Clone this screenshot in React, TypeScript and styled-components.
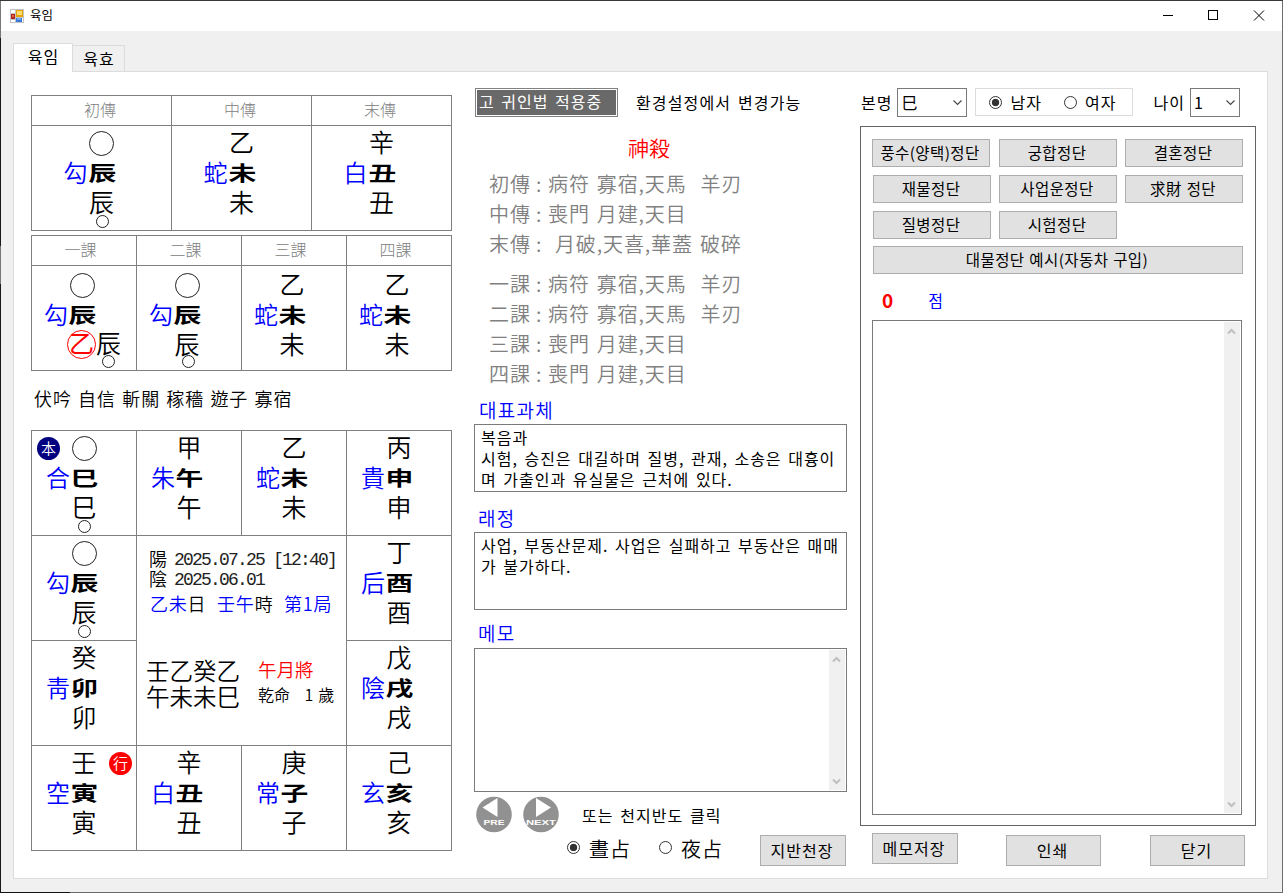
import React from "react";
import styled, { createGlobalStyle, css } from "styled-components";

const GlobalStyle = createGlobalStyle`
  html, body { margin: 0; padding: 0; overflow: hidden; }
  *, *::before, *::after { box-sizing: border-box; }
  body {
    font-family: "Noto Sans CJK KR", "Noto Sans", sans-serif;
    color: #000;
    background: #fff;
  }
`;

/* ---------- window frame ---------- */

const Window = styled.div`
  width: 1283px;
  height: 893px;
  padding: 1px;
  background:
    linear-gradient(#3a363b, #3a363b) 0 0 / 100% 1px no-repeat,
    linear-gradient(90deg, #151215 70px, #6b6b6b 70px) 0 100% / 100% 1px no-repeat,
    linear-gradient(#777 38px, #1a181b 38px 246px, #777 246px 284px, #1a181b 284px) 0 0 / 1px 100% no-repeat,
    #6b6b6b;
`;

const Frame = styled.div`
  display: flex;
  flex-direction: column;
  height: 891px;
  background: #f0f0f0;
`;

const TitleBar = styled.header`
  display: flex;
  align-items: center;
  height: 30px;
  padding-left: 9px;
  background: #fff;
`;

const Title = styled.span`
  flex: 1;
  margin-left: 6px;
  font-size: 12.5px;
  line-height: 20px;
  padding-bottom: 2px;
`;

const WindowButtons = styled.div`
  display: flex;
  svg { display: block; width: 46px; height: 30px; }
`;

const TabStrip = styled.nav`
  display: flex;
  align-items: flex-end;
  height: 40px;
  padding-left: 12px;
`;

const Tab = styled.div<{ $active?: boolean }>`
  padding-left: 1px;
  font-size: 16px;
  letter-spacing: 1px;
  text-align: center;
  border: 1px solid #dcdcdc;
  border-bottom: 0;
  ${(p) =>
    p.$active
      ? css`
          width: 60px;
          height: 29px;
          margin-bottom: -1px;
          line-height: 25px;
          background: #fff;
          position: relative;
        `
      : css`
          width: 53px;
          height: 26px;
          margin-left: -1px;
          line-height: 24px;
          background: #f0f0f0;
        `}
`;

const Page = styled.main`
  display: flex;
  align-items: flex-start;
  width: 1255px;
  height: 808px;
  margin-left: 12px;
  padding-left: 17px;
  background: #fff;
  border: 1px solid #dcdcdc;
`;

const Column = styled.section<{ $w: number; $top: number; $gap?: number }>`
  display: flex;
  flex-direction: column;
  flex: none;
  width: ${(p) => p.$w}px;
  padding-top: ${(p) => p.$top}px;
  margin-left: ${(p) => p.$gap ?? 0}px;
`;

/* ---------- divination charts ---------- */

const LINE = "#808080";
const KAI = `"Noto Sans CJK TC", "Noto Sans", sans-serif`;

const Chart = styled.div<{ $cols: number; $cell: number; $mt?: number }>`
  display: grid;
  grid-template-columns: repeat(${(p) => p.$cols}, ${(p) => p.$cell}px);
  width: 421px;
  margin-top: ${(p) => p.$mt ?? 0}px;
  border-top: 1px solid ${LINE};
  border-left: 1px solid ${LINE};
  font-family: ${KAI};
  font-weight: 350;
`;

const HeadCell = styled.div<{ $shift?: number }>`
  height: 30px;
  padding-right: ${(p) => p.$shift ?? 0}px;
  border-right: 1px solid ${LINE};
  border-bottom: 1px solid ${LINE};
  color: ${LINE};
  font-size: 16px;
  font-weight: 300;
  line-height: 27px;
  text-align: center;
`;

const CellBox = styled.div<{ $shift: number; $down: number }>`
  position: relative;
  display: flex;
  flex-direction: column;
  align-items: center;
  height: 105px;
  padding-top: ${(p) => p.$down}px;
  padding-right: ${(p) => Math.max(0, -p.$shift) * 2}px;
  padding-left: ${(p) => Math.max(0, p.$shift) * 2}px;
  border-right: 1px solid ${LINE};
  border-bottom: 1px solid ${LINE};
`;

const Glyph = styled.div`
  height: 30px;
  font-size: 25px;
  line-height: 25px;
`;

const VoidMark = styled.div`
  width: 25px;
  height: 25px;
  margin: 2px 0 3px;
  border: 1px solid #222;
  border-radius: 50%;
`;

const Pair = styled.div`
  display: flex;
  height: 30px;
  padding-right: 24px;
  line-height: 26px;
`;

const General = styled.span`
  width: 25px;
  color: #00f;
  font-size: 24px;
`;

const Seal = styled.span`
  width: 27px;
  font-size: 27px;
  font-weight: 700;
  transform: scale(1.03, 0.74);
`;

const SmallRing = styled.i<{ $dx?: number }>`
  position: absolute;
  top: 89px;
  left: calc(50% + ${(p) => p.$dx ?? 0}px);
  width: 13px;
  height: 13px;
  margin-left: -6px;
  border: 1px solid #222;
  border-radius: 50%;
`;

const Badge = styled.span<{ $bg: string; $left: number }>`
  position: absolute;
  top: 6px;
  left: ${(p) => p.$left}px;
  width: 23px;
  height: 23px;
  border-radius: 50%;
  background: ${(p) => p.$bg};
  color: #fff;
  font-size: 15px;
  line-height: 21px;
  text-align: center;
`;

const DayPair = styled.div`
  display: flex;
  align-items: flex-start;
  padding-left: 24px;
  font-size: 25px;
  line-height: 23px;
`;

const RedRing = styled.span`
  width: 29px;
  height: 29px;
  margin-top: -1px;
  border: 1px solid #f00;
  border-radius: 50%;
  color: #f00;
  font-weight: 400;
  line-height: 23px;
  text-align: center;
`;

const Traits = styled.div`
  height: 60px;
  padding-left: 3px;
  font-family: ${KAI};
  font-size: 18px;
  font-weight: 350;
  line-height: 55px;
  letter-spacing: 0.9px;
  word-spacing: 1.4px;
  white-space: nowrap;
`;

const Center = styled.div`
  grid-column: 2 / span 2;
  grid-row: 2 / span 2;
  padding: 13px 0 0 12px;
  border-right: 1px solid ${LINE};
  border-bottom: 1px solid ${LINE};
  white-space: pre;
`;

const DateLine = styled.div`
  display: flex;
  height: 20px;
  font-size: 18px;
  line-height: 19px;
`;

const Digits = styled.span`
  margin-left: 7px;
  font-family: "Liberation Mono", monospace;
  font-size: 18px;
  letter-spacing: -1.8px;
  line-height: 22px;
  color: #222;
`;

const Hour = styled.div`
  height: 30px;
  padding-left: 1px;
  font-size: 18px;
  line-height: 28px;
  letter-spacing: 0.8px;
  word-spacing: 5.8px;
  margin-bottom: 38px;
`;

const Ink = styled.span<{ $c: string }>`
  color: ${(p) => p.$c};
`;

const Pillars = styled.div`
  display: flex;
  margin-left: -3px;
`;

const PillarText = styled.div`
  width: 112px;
  font-size: 23.5px;
  line-height: 26px;
`;

const PillarSide = styled.div`
  font-size: 16px;
  line-height: 26px;
  word-spacing: 1.3px;
`;

const MonthGeneral = styled.div`
  color: #f00;
  font-size: 18.5px;
  line-height: 24px;
`;

/* ---------- shared controls ---------- */

const Text = styled.span<{
  $size?: number;
  $ls?: number;
  $ws?: number;
  $c?: string;
  $ml?: number;
  $weight?: number;
}>`
  font-size: ${(p) => p.$size ?? 16}px;
  letter-spacing: ${(p) => p.$ls ?? 1}px;
  word-spacing: ${(p) => p.$ws ?? 2}px;
  color: ${(p) => p.$c ?? "#000"};
  margin-left: ${(p) => p.$ml ?? 0}px;
  padding-bottom: 1px;
  font-weight: ${(p) => p.$weight ?? 400};
  white-space: pre;
`;

const Bar = styled.div<{ $h: number; $mt?: number; $pl?: number }>`
  display: flex;
  align-items: center;
  flex: none;
  height: ${(p) => p.$h}px;
  margin-top: ${(p) => p.$mt ?? 0}px;
  padding-left: ${(p) => p.$pl ?? 0}px;
  line-height: 24px;
`;

const Notice = styled.div`
  width: 143px;
  height: 29px;
  padding-left: 3px;
  border: 1px solid #808080;
  box-shadow: inset 0 0 0 1px #fff;
  background: #696969;
  line-height: 24px;
`;

const Button = styled.button<{ $w?: number; $h?: number; $ml?: number; $mt?: number; $size?: number }>`
  flex: none;
  width: ${(p) => p.$w ?? 118}px;
  height: ${(p) => p.$h ?? 28}px;
  margin: ${(p) => p.$mt ?? 0}px 0 0 ${(p) => p.$ml ?? 0}px;
  padding: 0 2px 2px 0;
  border: 1px solid #adadad;
  background: #e1e1e1;
  color: #000;
  font-family: inherit;
  font-size: ${(p) => p.$size ?? 15.5}px;
  letter-spacing: ${(p) => (p.$size ? 1 : 0.4)}px;
  word-spacing: 1px;
  line-height: 20px;
  white-space: nowrap;
`;

const RadioDot = styled.i<{ $on?: boolean }>`
  flex: none;
  width: 13px;
  height: 13px;
  border: 1px solid #333;
  border-radius: 50%;
  background: ${(p) => (p.$on ? "radial-gradient(circle, #333 3.4px, #fff 4.1px)" : "#fff")};
`;

const SelectBox = styled.div<{ $w: number; $ml: number }>`
  display: flex;
  align-items: center;
  justify-content: space-between;
  width: ${(p) => p.$w}px;
  height: 29px;
  margin-left: ${(p) => p.$ml}px;
  padding: 0 4px 1px 3px;
  border: 1px solid #7a7a7a;
  font-size: 16px;
  line-height: 24px;
`;

const GenderGroup = styled.div`
  display: flex;
  align-items: center;
  width: 158px;
  height: 28px;
  margin: 0 0 1px 8px;
  padding-left: 13px;
  border: 1px solid #dcdcdc;
`;

const StarLine = styled.div`
  display: flex;
  height: 30px;
  padding-left: 15px;
  color: #808080;
  font-size: 20px;
  font-weight: 350;
  line-height: 28px;
  letter-spacing: 0.9px;
  word-spacing: 1.6px;
  white-space: pre;
`;

const StarName = styled.span`
  width: 47px;
`;

const StarColon = styled.span`
  width: 12px;
`;

const NoteBox = styled.div<{ $h: number }>`
  display: flex;
  justify-content: space-between;
  flex: none;
  width: 373px;
  height: ${(p) => p.$h}px;
  padding: 1px;
  border: 1px solid #7a7a7a;
  background: #fff;
`;

const NoteText = styled.p`
  margin: 0;
  padding: 1px 0 0 5px;
  font-size: 16px;
  line-height: 21px;
  letter-spacing: 0.97px;
  word-spacing: 2.1px;
  white-space: pre;
`;

const Track = styled.div`
  display: flex;
  flex-direction: column;
  justify-content: space-between;
  align-items: center;
  width: 16px;
  padding: 6px 1px 5px 0;
  background: #f0f0f0;
`;

const Panel = styled.div`
  display: flex;
  flex-direction: column;
  width: 396px;
  height: 700px;
  margin-top: 9px;
  padding: 12px 0 0 11px;
  border: 1px solid #646464;
`;

const ButtonGrid = styled.div`
  display: grid;
  grid-template-columns: 118px 118px 118px;
  column-gap: 8px;
  row-gap: 8px;
  padding-left: 1px;

  & > :first-child { margin-left: -1px; }
`;

const Result = styled(NoteBox)`
  width: 370px;
`;

const NavRow = styled.div`
  display: flex;
  align-items: center;
  height: 38px;
  margin-top: 4px;
  padding-left: 1px;
  svg { display: block; margin-right: 9px; }
`;

/* ---------- small drawings ---------- */

const Chevron = ({ up }: { up?: boolean }) => (
  <svg width="9" height="7" viewBox="0 0 9 7">
    <path d={up ? "M1 5.5 4.5 2 8 5.5" : "M1 1.5 4.5 5 8 1.5"} fill="none" stroke="#bfbfbf" strokeWidth="2" />
  </svg>
);

const SelectArrow = () => (
  <svg width="9" height="7" viewBox="0 0 9 7">
    <path d="M0.500 1.500 4.500 5.500 8.500 1.500" fill="none" stroke="#444" strokeWidth="1.100" />
  </svg>
);

const Scroll = () => (
  <Track>
    <Chevron up />
    <Chevron />
  </Track>
);

const AppIcon = () => (
  <svg width="14" height="14" viewBox="0 0 14 14">
    <rect width="14" height="14" fill="#c3c3c3" />
    <rect x="1" y="1" width="4" height="3" fill="#fff" />
    <rect x="1" y="11" width="4" height="2" fill="#fff" />
    <rect x="12" y="9" width="1" height="4" fill="#fff" />
    <rect x="1" y="5" width="4" height="5" fill="#b3261e" />
    <rect x="2" y="6" width="2" height="2" fill="#e0604f" />
    <rect x="6" y="1" width="7" height="7" fill="#e5a50a" />
    <rect x="7" y="2" width="5" height="4" fill="#ffdc6b" />
    <rect x="6" y="9" width="6" height="4" fill="#3a78d8" />
    <rect x="7" y="9" width="4" height="2" fill="#6fa5ef" />
  </svg>
);

const NavIcon = ({ next }: { next?: boolean }) => (
  <svg width="38" height="38" viewBox="0 0 38 38">
    <circle cx="19" cy="18.500" r="17.8" fill="#919191" />
    <path d={next ? "M14 2v19l15-9.5z" : "M22.500 2v19L7.500 11.500z"} fill="#fff" />
    <text
      x="19"
      y="28.800"
      textAnchor="middle"
      textLength={next ? 30 : 21}
      lengthAdjust="spacingAndGlyphs"
      fontFamily="Liberation Sans, sans-serif"
      fontSize="8"
      fontWeight="700"
      fill="#fff"
    >
      {next ? "NEXT" : "PRE"}
    </text>
  </svg>
);

/* ---------- chart cell ---------- */

type CellData = {
  top: string | null;
  general: string;
  seal: string;
  base: string;
  ring?: boolean;
  badge?: { text: string; bg: string; left: number };
  day?: string;
};

const Cell = ({ d, shift = 0, down = 3 }: { d: CellData; shift?: number; down?: number }) => (
  <CellBox $shift={shift} $down={down}>
    {d.top ? <Glyph>{d.top}</Glyph> : <VoidMark />}
    <Pair>
      <General>{d.general}</General>
      <Seal>{d.seal}</Seal>
    </Pair>
    {d.day ? (
      <DayPair>
        <RedRing>{d.day}</RedRing>
        {d.base}
      </DayPair>
    ) : (
      <Glyph>{d.base}</Glyph>
    )}
    {d.ring && <SmallRing $dx={d.day ? 24 : shift < 0 ? -1 : 0} />}
    {d.badge && (
      <Badge $bg={d.badge.bg} $left={d.badge.left}>
        {d.badge.text}
      </Badge>
    )}
  </CellBox>
);

const c = (top: string | null, general: string, seal: string, extra: Partial<CellData> = {}): CellData => ({
  top,
  general,
  seal,
  base: seal,
  ...extra,
});

const passes = [c(null, "勾", "辰", { ring: true }), c("乙", "蛇", "未"), c("辛", "白", "丑")];

const lessons = [
  c(null, "勾", "辰", { ring: true, day: "乙" }),
  c(null, "勾", "辰", { ring: true }),
  c("乙", "蛇", "未"),
  c("乙", "蛇", "未"),
];

const plateUpper = [
  c(null, "合", "巳", { ring: true, badge: { text: "本", bg: "#000080", left: 5 } }),
  c("甲", "朱", "午"),
  c("乙", "蛇", "未"),
  c("丙", "貴", "申"),
  c(null, "勾", "辰", { ring: true }),
];

const plateLower = [
  c("丁", "后", "酉"),
  c("癸", "靑", "卯"),
  c("戊", "陰", "戌"),
  c("壬", "空", "寅", { badge: { text: "行", bg: "#ff0000", left: 77 } }),
  c("辛", "白", "丑"),
  c("庚", "常", "子"),
  c("己", "玄", "亥"),
];

const starsUpper = [
  ["初傳", "病符 寡宿,天馬  羊刃"],
  ["中傳", "喪門 月建,天目"],
  ["末傳", " 月破,天喜,華蓋 破碎"],
];

const starsLower = [
  ["一課", "病符 寡宿,天馬  羊刃"],
  ["二課", "病符 寡宿,天馬  羊刃"],
  ["三課", "喪門 月建,天目"],
  ["四課", "喪門 月建,天目"],
];

const Stars = ({ rows }: { rows: string[][] }) => (
  <>
    {rows.map(([name, text]) => (
      <StarLine key={name}>
        <StarName>{name}</StarName>
        <StarColon>:</StarColon>
        <span>{text}</span>
      </StarLine>
    ))}
  </>
);

export default function App() {
  return (
    <Window>
      <GlobalStyle />
      <Frame>
        <TitleBar>
          <AppIcon />
          <Title>육임</Title>
          <WindowButtons>
            <svg viewBox="0 0 46 30"><path d="M19 14.500h10" stroke="#000" /></svg>
            <svg viewBox="0 0 46 30"><rect x="18.500" y="9.500" width="9" height="9" fill="none" stroke="#000" /></svg>
            <svg viewBox="0 0 46 30"><path d="m18 9.500 10 10m0-10-10 10" stroke="#000" /></svg>
          </WindowButtons>
        </TitleBar>

        <TabStrip>
          <Tab $active>육임</Tab>
          <Tab>육효</Tab>
        </TabStrip>

        <Page>
          <Column $w={421} $top={23}>
            <Chart $cols={3} $cell={140}>
              {["初傳", "中傳", "末傳"].map((t) => (
                <HeadCell key={t} $shift={3}>{t}</HeadCell>
              ))}
              {passes.map((d, i) => (
                <Cell key={i} d={d} />
              ))}
            </Chart>
            <Chart $cols={4} $cell={105} $mt={4}>
              {["一課", "二課", "三課", "四課"].map((t) => (
                <HeadCell key={t} $shift={7}>{t}</HeadCell>
              ))}
              {lessons.map((d, i) => (
                <Cell key={i} d={d} shift={-2} down={5} />
              ))}
            </Chart>
            <Traits>伏吟 自信 斬關 稼穡 遊子 寡宿</Traits>
            <Chart $cols={4} $cell={105} $mt={-1}>
              {plateUpper.map((d, i) => (
                <Cell key={i} d={d} />
              ))}
              <Center>
                <DateLine>陽<Digits>2025.07.25 [12:40]</Digits></DateLine>
                <DateLine>陰<Digits>2025.06.01</Digits></DateLine>
                <Hour>
                  <Ink $c="#00f">乙未</Ink>日 <Ink $c="#00f">壬午</Ink>時 <Ink $c="#00f">第1局</Ink>
                </Hour>
                <Pillars>
                  <PillarText>壬乙癸乙<br />午未未巳</PillarText>
                  <PillarSide>
                    <MonthGeneral>午月將</MonthGeneral>
                    乾命   1 歲
                  </PillarSide>
                </Pillars>
              </Center>
              {plateLower.map((d, i) => (
                <Cell key={i} d={d} />
              ))}
            </Chart>
          </Column>

          <Column $w={373} $top={16} $gap={22}>
            <Bar $h={29} $pl={1}>
              <Notice><Text $c="#fff">고 귀인법 적용중</Text></Notice>
              <Text $ml={18} $ls={1.15}>환경설정에서 변경가능</Text>
            </Bar>
            <Bar $h={28} $mt={16} $pl={154}>
              <Text $size={21} $ls={0} $c="#f00" $weight={350}>神殺</Text>
            </Bar>
            <Bar $h={9} />
            <Stars rows={starsUpper} />
            <Bar $h={10} />
            <Stars rows={starsLower} />
            <Bar $h={28} $mt={6} $pl={5}><Text $size={19} $ls={1.3} $c="#00f" $weight={350}>대표과체</Text></Bar>
            <NoteBox $h={68}>
              <NoteText>{"복음과\n시험, 승진은 대길하며 질병, 관재, 소송은 대흉이\n며 가출인과 유실물은 근처에 있다."}</NoteText>
            </NoteBox>
            <Bar $h={28} $mt={12} $pl={4}><Text $size={19} $ls={1.3} $c="#00f" $weight={350}>래정</Text></Bar>
            <NoteBox $h={78}>
              <NoteText>{"사업, 부동산문제. 사업은 실패하고 부동산은 매매\n가 불가하다."}</NoteText>
            </NoteBox>
            <Bar $h={26} $mt={10} $pl={4}><Text $size={19} $ls={1.3} $c="#00f" $weight={350}>메모</Text></Bar>
            <Bar $h={2} />
            <NoteBox $h={144}>
              <span />
              <Scroll />
            </NoteBox>
            <NavRow>
              <NavIcon />
              <NavIcon next />
              <Text $ml={13} $ls={1.05}>또는 천지반도 클릭</Text>
            </NavRow>
            <Bar $h={31} $pl={93}>
              <Bar $h={17}><Bar $h={13} $mt={-4}><RadioDot $on /></Bar></Bar>
              <Text $size={20} $ml={9} $weight={350}>晝占</Text>
              <Bar $h={17} $pl={28}><Bar $h={13} $mt={-4}><RadioDot /></Bar></Bar>
              <Text $size={20} $ml={9} $weight={350}>夜占</Text>
              <Button $w={86} $h={31} $ml={37} $mt={2} $size={16}>지반천장</Button>
            </Bar>
          </Column>

          <Column $w={396} $top={16} $gap={13}>
            <Bar $h={29} $pl={1}>
              <Text>본명</Text>
              <SelectBox $w={70} $ml={5}>巳<SelectArrow /></SelectBox>
              <GenderGroup>
                <RadioDot $on />
                <Text $ml={8}>남자</Text>
                <Bar $h={20} $pl={22}><RadioDot /></Bar>
                <Text $ml={8}>여자</Text>
              </GenderGroup>
              <Text $ml={20}>나이</Text>
              <SelectBox $w={50} $ml={5}>1<SelectArrow /></SelectBox>
            </Bar>
            <Panel>
              <ButtonGrid>
                <Button>풍수(양택)정단</Button>
                <Button>궁합정단</Button>
                <Button>결혼정단</Button>
                <Button>재물정단</Button>
                <Button>사업운정단</Button>
                <Button>求財 정단</Button>
                <Button>질병정단</Button>
                <Button>시험정단</Button>
              </ButtonGrid>
              <Button $w={370} $ml={1} $mt={7}>대물정단 예시(자동차 구입)</Button>
              <Bar $h={40} $mt={6} $pl={10}>
                <Text $size={19} $c="#f00" $weight={700}>0</Text>
                <Text $ml={34} $c="#00f">점</Text>
              </Bar>
              <Result $h={495}>
                <span />
                <Scroll />
              </Result>
            </Panel>
            <Bar $h={33} $mt={7} $pl={12}>
              <Button $w={86} $h={31} $mt={-2} $size={16}>메모저장</Button>
              <Button $w={95} $h={31} $mt={2} $ml={48} $size={16}>인쇄</Button>
              <Button $w={95} $h={31} $mt={2} $ml={49} $size={16}>닫기</Button>
            </Bar>
          </Column>
        </Page>
      </Frame>
    </Window>
  );
}
